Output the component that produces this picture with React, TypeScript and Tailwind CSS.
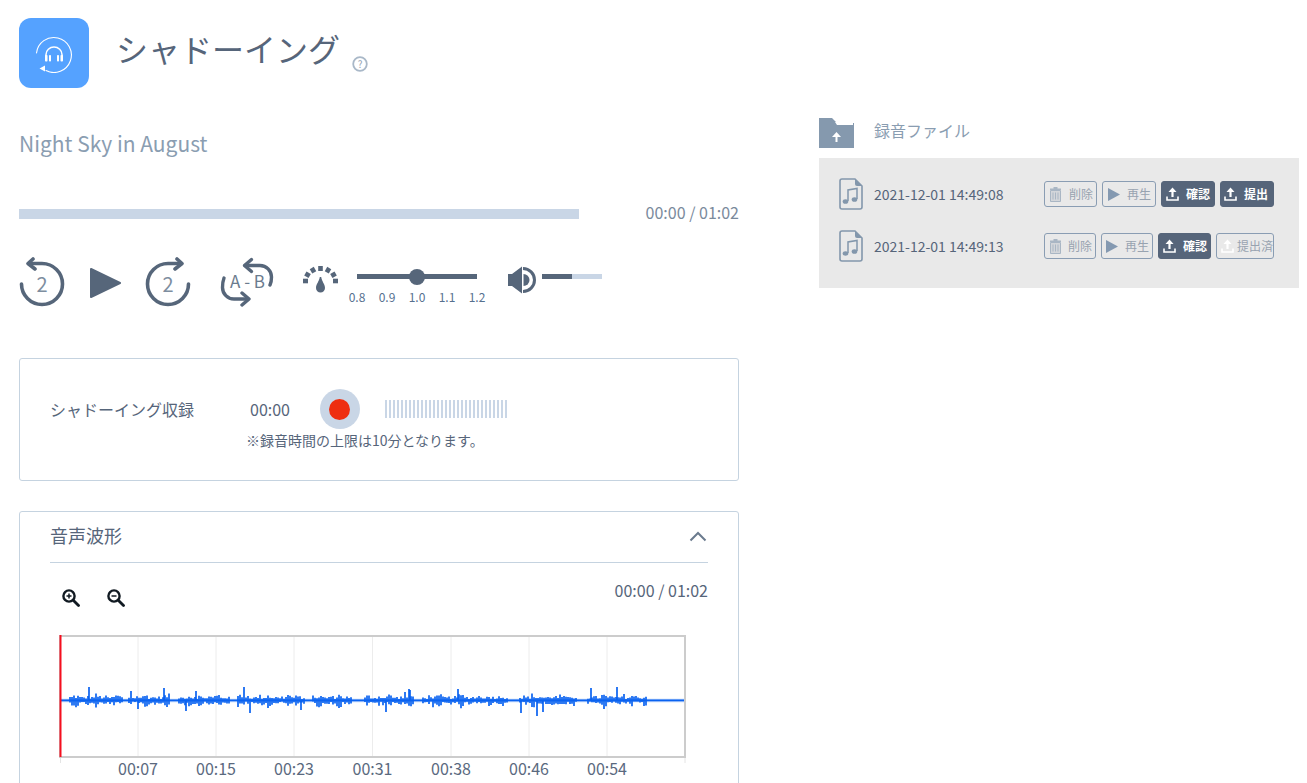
import React from "react";

const SL = "#56667a";

function HeadsetIcon() {
  return (
    <svg width="40" height="40" viewBox="0 0 40 40" fill="none" stroke="#fff" strokeLinecap="round">
      <path d="M2.5 20 A17.5 17.5 0 1 1 12 37.6" strokeWidth="1.1" />
      <path d="M5.5 35.5 L11 32.5 L11 38.5 Z" fill="#fff" stroke="none" />
      <path d="M12 26 V21.5 A8 7.5 0 0 1 28 21.5 V26" strokeWidth="1.5" />
      <rect x="11" y="22" width="2.5" height="6.5" rx="0.8" fill="#fff" stroke="none" />
      <rect x="15" y="22" width="2" height="6.5" rx="0.8" fill="#fff" stroke="none" />
      <rect x="23" y="22" width="2" height="6.5" rx="0.8" fill="#fff" stroke="none" />
      <rect x="26.5" y="22" width="2.5" height="6.5" rx="0.8" fill="#fff" stroke="none" />
    </svg>
  );
}

function ReplayIcon({ forward }: { forward?: boolean }) {
  return (
    <svg width="46" height="52" viewBox="0 0 46 52" className="shrink-0" fill="none" style={forward ? { transform: "scaleX(-1)" } : undefined}>
      <path d="M2.5 27 A20.5 20.5 0 1 0 23 6.5 L10 6.5" stroke={SL} strokeWidth="3.6" strokeLinecap="round" />
      <path d="M14 2 L9 6.5 L16 12" stroke={SL} strokeWidth="3.6" strokeLinecap="round" strokeLinejoin="round" />
    </svg>
  );
}

function ABIcon() {
  return (
    <svg width="54" height="50" viewBox="0 0 54 50" className="shrink-0" fill="none" stroke={SL} strokeWidth="3.4" strokeLinecap="round" strokeLinejoin="round">
      <path d="M25 8.5 H40 A11.5 11.5 0 0 1 51.5 20 Q51.5 25 50 28" />
      <path d="M31.5 2.5 L24.5 8.5 L31.5 14.5" />
      <path d="M28 42 H14 A11.5 11.5 0 0 1 2.5 30.5 Q2.5 25 4 21" />
      <path d="M22 36 L29 42 L22 48" />
    </svg>
  );
}

function GaugeIcon() {
  const angles = [180, 150, 120, 90, 60, 30, 0];
  return (
    <svg width="35" height="28" viewBox="0 0 35 28" className="shrink-0" fill={SL}>
      {angles.map((a) => {
        const r = (a * Math.PI) / 180;
        const x1 = 17.5 + 17.5 * Math.cos(r);
        const y1 = 15 - 15 * Math.sin(r);
        const x2 = 17.5 + 12.5 * Math.cos(r);
        const y2 = 15 - 10 * Math.sin(r);
        return <path key={a} d={`M${x1} ${y1}L${x2} ${y2}`} stroke={SL} strokeWidth="4.6" />;
      })}
      <path d="M16.8 11 C16 16 13 18 13 22 A4.5 4.5 0 0 0 22 22 C22 18 19 16 18.2 11 Z" />
    </svg>
  );
}

function VolumeIcon() {
  return (
    <svg width="28" height="28" viewBox="0 0 28 28" className="shrink-0">
      <path d="M0 8 H4 L14 0.5 V27.5 L4 20 H0 Z" fill={SL} />
      <path d="M15.5 8 A6 6 0 0 1 15.5 20 Z" fill={SL} />
      <path d="M15 2.5 A11.5 11.5 0 0 1 15 25.5" fill="none" stroke={SL} strokeWidth="3" />
    </svg>
  );
}

function TrashIcon({ c = "#a9b6c4" }: { c?: string }) {
  return (
    <svg width="13" height="15" viewBox="0 0 13 15" className="shrink-0">
      <path d="M1 1.5 H12 V3 H1 Z M4.5 0 H8.5 V1.5 H4.5 Z" fill={c} />
      <path d="M1.5 3.5 H11.5 V14.5 H1.5 Z" fill="#d3d6da" stroke={c} strokeWidth="1" />
      <path d="M4 5.5 V12.5 M6.5 5.5 V12.5 M9 5.5 V12.5" stroke={c} strokeWidth="1" />
    </svg>
  );
}

function PlaySmall() {
  return (
    <svg width="12" height="13" viewBox="0 0 12 13" className="shrink-0">
      <path d="M0 0 L12 6.5 L0 13 Z" fill="#8499b1" />
    </svg>
  );
}

function UploadIcon({ c = "#fff" }: { c?: string }) {
  return (
    <svg width="13" height="14" viewBox="0 0 13 14" className="shrink-0" fill="none" stroke={c}>
      <path d="M1 9.5 V13 H12 V9.5" strokeWidth="1.6" />
      <path d="M6.5 10 V2" strokeWidth="2.2" />
      <path d="M6.5 0.5 L10.5 5 H2.5 Z" fill={c} stroke="none" />
    </svg>
  );
}

function FileIcon() {
  return (
    <svg width="24" height="32" viewBox="0 0 24 32" className="shrink-0" fill="none">
      <path d="M1 3 Q1 1 3 1 H16 L23 8 V29 Q23 31 21 31 H3 Q1 31 1 29 Z" stroke="#8397ac" strokeWidth="1.6" />
      <path d="M16 1 L16 6 Q16 8 18 8 H23" fill="#8397ac" />
      <path d="M9 23 V12 L18 10.5 V21" stroke="#8397ac" strokeWidth="1.5" />
      <ellipse cx="6.5" cy="23.5" rx="2.8" ry="2.3" fill="#8397ac" />
      <ellipse cx="15.5" cy="21.5" rx="2.8" ry="2.3" fill="#8397ac" />
    </svg>
  );
}

function Btn({ w, dark, icon, label, gap = "gap-[9px]", pad = "pl-[4px]" }: { w: string; dark?: boolean; icon: React.ReactNode; label: string; gap?: string; pad?: string }) {
  return (
    <div className={`${w} h-[26px] rounded-[3px] border flex items-center ${gap} ${pad} text-[12px] whitespace-nowrap overflow-hidden ${dark ? "bg-[#56657a] border-[#56657a] text-white font-bold" : "border-[#8a9db3] text-[#98a3b0]"}`}>
      {icon}
      <span>{label}</span>
    </div>
  );
}

function FileRow({ date, children }: { date: string; children: React.ReactNode }) {
  return (
    <div className="flex items-center h-[32px]">
      <FileIcon />
      <span className="ml-[11px] w-[170px] text-[14px] text-[#56657a]">{date}</span>
      <div className="flex gap-[5px]">{children}</div>
    </div>
  );
}

const SEGMENTS: [number, number][] = [
  [70, 123], [129, 170], [179, 229], [238, 304], [313, 352], [365, 413], [423, 507], [520, 576], [588, 646],
];
const SPIKES: [number, number][] = [
  [89, 687], [131, 691], [138, 709], [164, 688], [186, 711], [196, 691], [244, 687], [250, 713], [301, 710],
  [386, 712], [409, 689], [458, 689], [521, 713], [537, 716], [543, 712], [591, 688], [604, 709], [617, 687], [410, 690], [405, 692],
];

function wavePath() {
  let s = 12345;
  const rnd = () => {
    s = (s * 1103515245 + 12345) & 0x7fffffff;
    return s / 0x7fffffff;
  };
  let d = "";
  for (const [a, b] of SEGMENTS) {
    for (let x = a; x <= b; x += 2) {
      const env = 0.35 + 0.65 * Math.abs(Math.sin(x * 0.31) * Math.cos(x * 0.13));
      const up = 1 + rnd() * 6 * env;
      const dn = 1.5 + rnd() * 7 * env;
      d += `M${x} ${(700 - up).toFixed(1)}V${(700 + dn).toFixed(1)}`;
    }
  }
  for (const [x, y] of SPIKES) d += `M${x} 700V${y}`;
  return d;
}

const GRID = [138, 216, 294, 372.5, 451, 529, 607];
const LABELS = ["00:07", "00:15", "00:23", "00:31", "00:38", "00:46", "00:54"];

function Chart() {
  return (
    <svg width="650" height="153" viewBox="50 630 650 153" className="block shrink-0">
      {GRID.map((x) => (
        <path key={x} d={`M${x} 636V757`} stroke="#ececec" strokeWidth="1" />
      ))}
      <path d="M60 700.5H684" stroke="#b9d2fb" strokeWidth="3.4" />
      <path d="M60 700.3H684" stroke="#0a62f0" strokeWidth="1.8" />
      <path d={wavePath()} stroke="#0a62f0" strokeWidth="1.7" fill="none" />
      <rect x="60" y="636" width="625" height="121" fill="none" stroke="#cccccc" strokeWidth="2" />
      <path d="M60.5 635V757" stroke="#f40f1e" strokeWidth="2" />
      <path d="M60.5 758V763M685 758V763" stroke="#e4e4e4" strokeWidth="1" />
      {GRID.map((x, i) => (
        <text key={x} x={x} y="775" textAnchor="middle" fontSize="16" fill="#5a697e">
          {LABELS[i]}
        </text>
      ))}
    </svg>
  );
}

function ZoomIcon({ plus }: { plus?: boolean }) {
  return (
    <svg width="18" height="18" viewBox="0 0 18 18" className="shrink-0" fill="none" stroke="#111a22">
      <circle cx="7" cy="7" r="5.6" strokeWidth="2.4" />
      <path d="M11.5 11.5 L16.5 16.5" strokeWidth="2.8" strokeLinecap="round" />
      <path d={plus ? "M4.5 7H9.5M7 4.5V9.5" : "M4.5 7H9.5"} strokeWidth="1.5" />
    </svg>
  );
}

export default function App() {
  return (
    <div
      className="w-[1307px] h-[783px] overflow-hidden bg-white flex pl-[19px]"
      style={{ fontFamily: '"Noto Sans CJK JP", "Noto Sans", sans-serif' }}
    >
      <div className="w-[720px] shrink-0 flex flex-col">
        <div className="flex mt-[18px] h-[70px]">
          <div className="w-[70px] h-[70px] rounded-[12px] bg-[#55a2ff] flex items-center justify-center">
            <HeadsetIcon />
          </div>
          <h1 className="ml-[27px] text-[32px] leading-[60px] text-[#56657a] font-normal whitespace-nowrap">シャドーイング</h1>
          <svg width="16" height="16" viewBox="0 0 16 16" className="ml-[12px] mt-[38px]" fill="none">
            <circle cx="8" cy="8" r="6.8" stroke="#a9b8c8" strokeWidth="1.8" />
            <text x="8" y="11.5" textAnchor="middle" fontSize="10" fill="#93a3b4">?</text>
          </svg>
        </div>
        <div className="mt-[38px] text-[21px] leading-[34px] text-[#8a9db1]">Night Sky in August</div>

        <div className="mt-[42px] flex items-center h-[24px]">
          <div className="w-[560px] h-[10px] bg-[#c9d6e6]" />
          <span className="ml-auto text-[16px] text-[#7a8a9c] mb-[4px]">00:00 / 01:02</span>
        </div>

        <div className="mt-[28px] flex items-start h-[60px]">
          <div className="relative w-[46px] h-[52px] mt-[3px] shrink-0">
            <ReplayIcon />
            <span className="absolute left-0 right-0 top-[13px] text-center text-[20px] leading-[28px] text-[#7e8ea0]">2</span>
          </div>
          <svg width="31" height="30" viewBox="0 0 31 30" className="ml-[25px] mt-[14px] shrink-0">
            <path d="M1 1 L30 15 L1 29 Z" fill={SL} stroke={SL} strokeWidth="2" strokeLinejoin="round" />
          </svg>
          <div className="relative w-[46px] h-[52px] mt-[3px] ml-[24px] shrink-0">
            <ReplayIcon forward />
            <span className="absolute left-0 right-0 top-[13px] text-center text-[20px] leading-[28px] text-[#7e8ea0]">2</span>
          </div>
          <div className="relative w-[54px] h-[50px] mt-[3px] ml-[29px] shrink-0">
            <ABIcon />
            <span className="absolute left-[10px] top-[12px] text-[17px] leading-[24px] text-[#6b7b8e] whitespace-nowrap">A - B</span>
          </div>
          <div className="ml-[29px] mt-[12px]">
            <GaugeIcon />
          </div>
          <div className="ml-[19px] w-[120px] shrink-0 mt-[20px] relative h-[5px] bg-[#56667a]">
            <div className="absolute left-[52px] top-[-5px] w-[16px] h-[16px] rounded-full bg-[#56667a]" />
            <div className="absolute top-[14px] left-[-15px] flex text-[12px] leading-[18px] text-[#56708f]">
              <span className="w-[30px] text-center">0.8</span>
              <span className="w-[30px] text-center">0.9</span>
              <span className="w-[30px] text-center">1.0</span>
              <span className="w-[30px] text-center">1.1</span>
              <span className="w-[30px] text-center">1.2</span>
            </div>
          </div>
          <div className="ml-[31px] mt-[12px]">
            <VolumeIcon />
          </div>
          <div className="ml-[6px] mt-[20px] w-[60px] h-[5px] bg-[#c9d6e6] shrink-0">
            <div className="w-[30px] h-full bg-[#56667a]" />
          </div>
        </div>

        <div className="mt-[49px] h-[123px] border border-[#c5d3e0] rounded-[3px] pl-[30px] relative shrink-0">
          <div className="flex items-center h-[40px] mt-[30px]">
            <span className="w-[200px] text-[16px] text-[#56657a] whitespace-nowrap">シャドーイング収録</span>
            <span className="w-[70px] text-[16px] text-[#56657a]">00:00</span>
            <div className="w-[40px] h-[40px] rounded-full bg-[#c9d6e6] flex items-center justify-center">
              <div className="w-[21px] h-[21px] rounded-full bg-[#ee2e10] mr-px" />
            </div>
            <div className="ml-[25px] flex gap-[2px] h-[18px]">
              {Array.from({ length: 31 }).map((_, i) => (
                <span key={i} className="w-[2px] h-full bg-[#c9d6e6]" />
              ))}
            </div>
          </div>
          <div className="ml-[196px] mt-[1px] text-[14px] leading-[20px] text-[#56657a] whitespace-nowrap">※録音時間の上限は10分となります。</div>
        </div>

        <div className="mt-[30px] border border-[#c5d3e0] rounded-[3px] px-[30px] h-[400px] shrink-0">
          <div className="h-[51px] border-b border-[#c5d3e0] flex items-center justify-between pb-[4px]">
            <span className="text-[18px] text-[#56657a]">音声波形</span>
            <svg width="18" height="11" viewBox="0 0 18 11" fill="none" className="mr-px mt-[3px]">
              <path d="M1.5 9.5 L9 2 L16.5 9.5" stroke="#6b7b8e" strokeWidth="2" />
            </svg>
          </div>
          <div className="flex justify-between h-[67px] pt-[16px]">
            <div className="flex gap-[27px] pl-[12px] pt-[10px]">
              <ZoomIcon plus />
              <ZoomIcon />
            </div>
            <span className="text-[16px] leading-[22px] text-[#56657a]">00:00 / 01:02</span>
          </div>
          <Chart />
        </div>
      </div>

      <div className="w-[480px] ml-[80px] shrink-0">
        <div className="mt-[118px] h-[30px] flex items-center">
          <svg width="35" height="30" viewBox="0 0 35 30" className="shrink-0">
            <path d="M0 0 H13 L18 5 H35 V30 H0 Z" fill="#8599ae" />
            <path d="M16 4 H34 V7 H18 Z" fill="#fff" />
            <path d="M17.5 24 V16" stroke="#fff" strokeWidth="2" />
            <path d="M13 19 L17.5 14 L22 19 Z" fill="#fff" />
          </svg>
          <span className="ml-[20px] text-[16px] text-[#8a9db1] mb-[6px]">録音ファイル</span>
        </div>
        <div className="mt-[10px] h-[130px] bg-[#e9e9e9] pl-[20px] pt-[20px] flex flex-col gap-[20px]">
          <FileRow date="2021-12-01 14:49:08">
            <Btn w="w-[53px]" icon={<TrashIcon />} label="削除" gap="gap-[7px]" />
            <Btn w="w-[54px]" icon={<PlaySmall />} label="再生" gap="gap-[7px]" pad="pl-[5px]" />
            <Btn w="w-[54px]" dark icon={<UploadIcon />} label="確認" gap="gap-[7px]" pad="pl-[4px]" />
            <Btn w="w-[54px]" dark icon={<UploadIcon />} label="提出" gap="gap-[7px]" pad="pl-[3px]" />
          </FileRow>
          <FileRow date="2021-12-01 14:49:13">
            <Btn w="w-[52px]" icon={<TrashIcon />} label="削除" gap="gap-[6px]" />
            <Btn w="w-[52px]" icon={<PlaySmall />} label="再生" gap="gap-[7px]" />
            <Btn w="w-[53px]" dark icon={<UploadIcon />} label="確認" gap="gap-[7px]" />
            <Btn w="w-[58px]" icon={<UploadIcon />} label="提出済" gap="gap-[3px]" />
          </FileRow>
        </div>
      </div>
    </div>
  );
}
